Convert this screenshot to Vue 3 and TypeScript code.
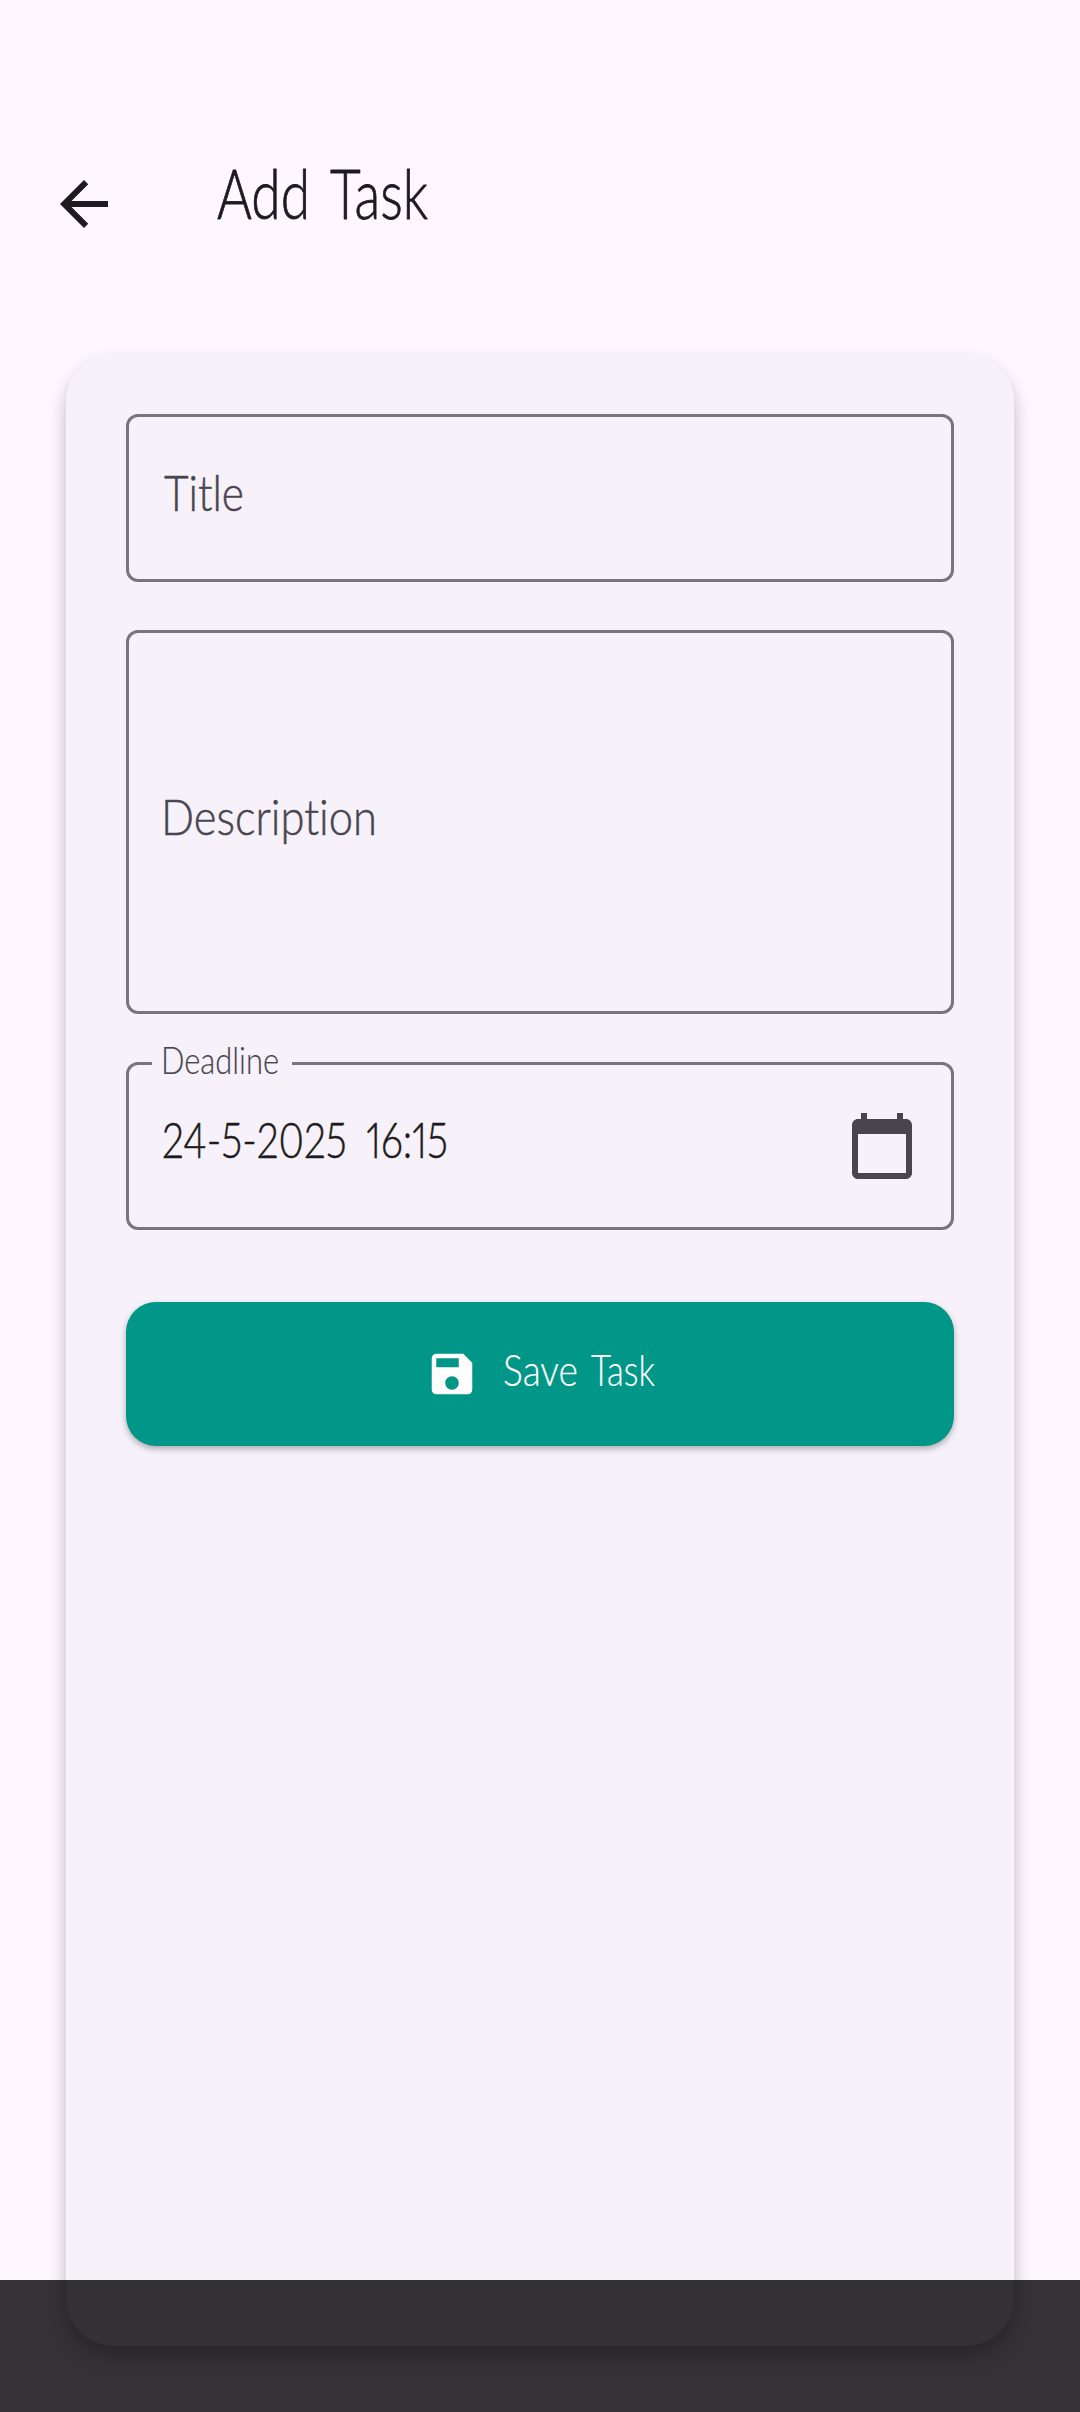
<script setup lang="ts">
interface Word {
  text: string
  x: number
  width: number
}

interface Label {
  words: Word[]
  width: number
  height: number
  baseline: number
  size: number
}

const heading: Label = {
  words: [
    { text: 'Add', x: 1, width: 93 },
    { text: 'Task', x: 114, width: 98 },
  ],
  width: 220,
  height: 80,
  baseline: 63,
  size: 68,
}

const title: Label = {
  words: [{ text: 'Title', x: 2, width: 80 }],
  width: 100,
  height: 60,
  baseline: 48.5,
  size: 49,
}

const description: Label = {
  words: [{ text: 'Description', x: -1, width: 216 }],
  width: 230,
  height: 66,
  baseline: 48.5,
  size: 49,
}

const deadline: Label = {
  words: [{ text: 'Deadline', x: 9, width: 118 }],
  width: 140,
  height: 44,
  baseline: 33.5,
  size: 38,
}

const date: Label = {
  words: [{ text: '24-5-2025 16:15', x: 0, width: 286 }],
  width: 300,
  height: 60,
  baseline: 48,
  size: 49,
}

const save: Label = {
  words: [
    { text: 'Save', x: -1, width: 75 },
    { text: 'Task', x: 87, width: 64 },
  ],
  width: 152,
  height: 60,
  baseline: 42,
  size: 44,
}
</script>

<template>
  <div class="screen">
    <header class="app-bar">
      <svg class="back" viewBox="0 0 24 24">
        <path d="M20 11H7.83l5.59-5.59L12 4l-8 8 8 8 1.41-1.41L7.83 13H20v-2z" />
      </svg>
      <svg class="label heading" :width="heading.width" :height="heading.height">
        <text v-for="w in heading.words" :key="w.text" :x="w.x" :y="heading.baseline" :font-size="heading.size" :textLength="w.width" lengthAdjust="spacingAndGlyphs">{{ w.text }}</text>
      </svg>
    </header>

    <main class="card">
      <div class="field title-field">
        <svg class="label hint" :width="title.width" :height="title.height">
          <text v-for="w in title.words" :key="w.text" :x="w.x" :y="title.baseline" :font-size="title.size" :textLength="w.width" lengthAdjust="spacingAndGlyphs">{{ w.text }}</text>
        </svg>
      </div>

      <div class="field description-field">
        <svg class="label hint" :width="description.width" :height="description.height">
          <text v-for="w in description.words" :key="w.text" :x="w.x" :y="description.baseline" :font-size="description.size" :textLength="w.width" lengthAdjust="spacingAndGlyphs">{{ w.text }}</text>
        </svg>
      </div>

      <div class="field deadline-field">
        <div class="notch">
          <svg class="label hint floating" :width="deadline.width" :height="deadline.height">
            <text v-for="w in deadline.words" :key="w.text" :x="w.x" :y="deadline.baseline" :font-size="deadline.size" :textLength="w.width" lengthAdjust="spacingAndGlyphs">{{ w.text }}</text>
          </svg>
        </div>
        <svg class="label value" :width="date.width" :height="date.height">
          <text v-for="w in date.words" :key="w.text" :x="w.x" :y="date.baseline" :font-size="date.size" :textLength="w.width" lengthAdjust="spacingAndGlyphs">{{ w.text }}</text>
        </svg>
        <svg class="calendar" viewBox="0 0 24 24">
          <path d="M20 3h-1V1h-2v2H7V1H5v2H4c-1.1 0-2 .9-2 2v16c0 1.1.9 2 2 2h16c1.1 0 2-.9 2-2V5c0-1.1-.9-2-2-2zm0 18H4V8h16v13z" />
        </svg>
      </div>

      <button class="save" type="button">
        <svg class="disk" viewBox="0 0 24 24">
          <path d="M17 3H5c-1.11 0-2 .9-2 2v14c0 1.1.89 2 2 2h14c1.1 0 2-.9 2-2V7l-4-4zm-5 16c-1.66 0-3-1.34-3-3s1.34-3 3-3 3 1.34 3 3-1.34 3-3 3zm3-10H5V5h10v4z" />
        </svg>
        <svg class="label save-label" :width="save.width" :height="save.height">
          <text v-for="w in save.words" :key="w.text" :x="w.x" :y="save.baseline" :font-size="save.size" :textLength="w.width" lengthAdjust="spacingAndGlyphs">{{ w.text }}</text>
        </svg>
      </button>
    </main>

    <div class="system-nav"></div>
  </div>
</template>

<style>
body {
  margin: 0;
  background: #fef7ff;
}
</style>

<style scoped>
.screen {
  position: relative;
  box-sizing: border-box;
  display: flex;
  flex-direction: column;
  width: 1080px;
  height: 2412px;
  padding: 102px 66px 66px;
  background: #fef7ff;
  overflow: hidden;
  font-family: Lato, 'Open Sans', sans-serif;
}

.label {
  display: block;
  flex: none;
  overflow: visible;
  font-weight: 300;
  font-variant-ligatures: none;
  font-variant-numeric: proportional-nums;
  fill: currentColor;
  stroke: currentColor;
  stroke-width: 0.5px;
  stroke-linejoin: round;
}

.app-bar {
  box-sizing: border-box;
  display: flex;
  align-items: flex-start;
  height: 252px;
  flex: none;
  margin-left: -18px;
  padding-top: 54px;
  color: #1d1b20;
}

.back {
  width: 72px;
  height: 72px;
  margin-top: 12px;
  fill: currentColor;
}

.heading {
  margin-left: 96px;
  stroke-width: 0.8px;
}

.card {
  box-sizing: border-box;
  display: flex;
  flex: 1;
  flex-direction: column;
  gap: 48px;
  padding: 60px;
  border-radius: 48px;
  background: #f7f2fa;
  box-shadow: 0 10px 18px rgba(0, 0, 0, 0.25);
}

.field {
  box-sizing: border-box;
  display: flex;
  align-items: flex-start;
  flex: none;
  border: 3px solid #79747e;
  border-radius: 12px;
  padding-left: 33px;
}

.hint {
  color: #49454f;
}

.floating,
.save-label {
  stroke-width: 0.2px;
}

.value {
  color: #1d1b20;
  word-spacing: 11px;
}

.title-field {
  height: 168px;
  padding-top: 45px;
}

.description-field {
  height: 384px;
  padding-top: 153px;
}

.deadline-field {
  position: relative;
  height: 168px;
  padding-top: 45px;
  padding-right: 33px;
}

.notch {
  position: absolute;
  top: -25px;
  left: 23px;
  background: #f7f2fa;
}

.calendar {
  width: 72px;
  height: 72px;
  margin-left: auto;
  fill: #49454f;
}

.save {
  display: flex;
  align-items: center;
  justify-content: center;
  gap: 25px;
  flex: none;
  height: 144px;
  margin-top: 24px;
  padding: 0;
  border: 0;
  border-radius: 30px;
  background: #009688;
  box-shadow: 0 3px 6px rgba(0, 0, 0, 0.3);
  color: #fff;
  font-family: inherit;
}

.disk {
  width: 54px;
  height: 54px;
  fill: currentColor;
}

.system-nav {
  position: absolute;
  right: 0;
  bottom: 0;
  left: 0;
  height: 132px;
  background: rgba(1, 0, 1, 0.8);
}
</style>
